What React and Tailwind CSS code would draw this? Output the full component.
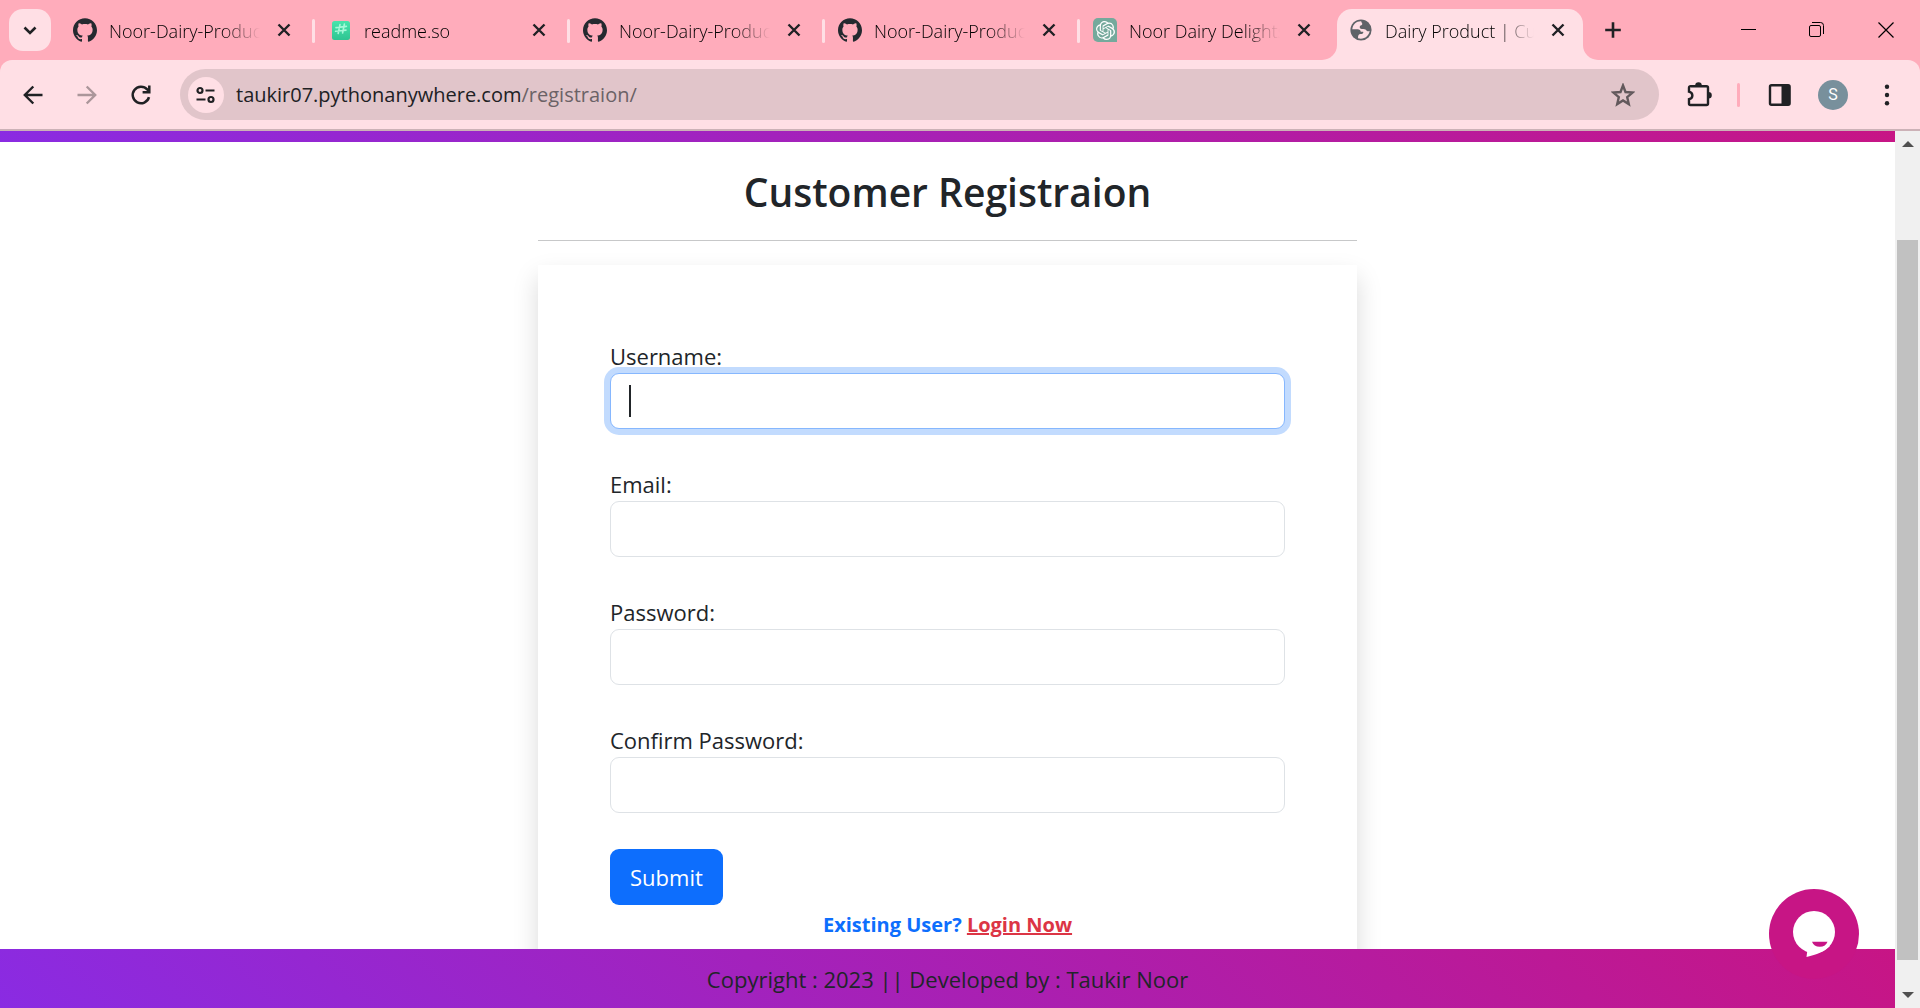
import React from "react";
import { SiGithub, SiOpenai } from "react-icons/si";

const ReadmeIcon = () => (
  <svg viewBox="0 0 24 24" className="h-6 w-6 shrink-0" aria-hidden="true">
    <defs>
      <linearGradient id="readme-tile" x1="0" y1="0" x2="0" y2="1">
        <stop offset="0" stopColor="#47e5ac" />
        <stop offset="1" stopColor="#2fc492" />
      </linearGradient>
    </defs>
    <rect x="4" y="3" width="18" height="19" rx="2.5" fill="url(#readme-tile)" />
    <g stroke="#a5f8d8" strokeWidth="1.6" strokeLinecap="round">
      <path d="M12 6.500 10.200 15.500M16.400 6 14.600 15M8 9.600 18.400 8.400M7.600 13.300 18 12.100" />
    </g>
  </svg>
);

const GlobeIcon = () => (
  <svg viewBox="0 0 24 24" className="h-6 w-6 shrink-0" aria-hidden="true">
    <circle cx="12" cy="12" r="10.6" fill="#5f6368" />
    <path
      d="M12.2 3.2C7.4 3 3.600 6.600 3.300 11.200H8.500C10.600 11.200 11.600 12.300 11.800 13.700H14.200C14.800 15.200 13.400 16 11.600 16 9.700 16 9 17.200 9 20.300 14.600 21.900 19.900 18.600 20.700 12.800 19.500 13.800 17.800 13.300 17.100 12.100 16.400 11 15 10.900 12.900 10.900 11 10.900 10.200 9.300 11 8 11.700 7 13.200 7.400 13.300 6 13.300 4.800 12.300 4.600 12.200 3.200Z"
      fill="#ffdfe5"
    />
  </svg>
);

const GithubTabIcon = () => <SiGithub className="h-6 w-6 shrink-0 text-[#24292f]" aria-hidden="true" />;

const OpenAiTabIcon = () => (
  <span className="flex h-6 w-6 shrink-0 items-center justify-center rounded-t-[5px] rounded-bl-[5px] bg-[#75a99c]">
    <SiOpenai className="h-[19px] w-[19px] text-white" aria-hidden="true" />
  </span>
);

const tabs = [
  { title: "Noor-Dairy-Products", Icon: GithubTabIcon },
  { title: "readme.so", Icon: ReadmeIcon },
  { title: "Noor-Dairy-Products", Icon: GithubTabIcon },
  { title: "Noor-Dairy-Products", Icon: GithubTabIcon },
  { title: "Noor Dairy Delights", Icon: OpenAiTabIcon },
];

const TabBody = ({ title, Icon }) => (
  <>
    <Icon />
    <button
      type="button"
      className="min-w-0 flex-1 overflow-hidden pt-0.5 text-left text-lg leading-6 font-light whitespace-nowrap text-black [mask-image:linear-gradient(to_right,#000_75%,transparent)]"
    >
      {title}
    </button>
    <button type="button" aria-label={"Close " + title} className="flex h-6 w-6 items-center justify-center">
      <svg viewBox="0 0 24 24" className="h-6 w-6">
        <path d="M6.500 6.500 17.500 17.500M17.500 6.500 6.500 17.500" stroke="currentColor" strokeWidth="2.4" />
      </svg>
    </button>
  </>
);

const TabStrip = () => (
  <div className="flex h-[60px] text-[#202124]">
    <div className="flex w-[61px] shrink-0 items-center pl-[9px]">
      <button
        type="button"
        aria-label="Search tabs"
        className="flex h-[42px] w-[42px] items-center justify-center rounded-[14px] bg-[#ffdfe5]"
      >
        <svg viewBox="0 0 24 24" className="h-6 w-6" fill="none">
          <path d="m6.500 9.500 5.500 5.500 5.500-5.500" stroke="currentColor" strokeWidth="2.600" />
        </svg>
      </button>
    </div>
    {tabs.map((tab, i) => (
      <div key={i} className="relative flex w-[255px] min-w-0 items-center gap-3 pr-5 pl-3">
        <TabBody {...tab} />
        {i < tabs.length - 1 && <span className="absolute top-[19px] right-px h-6 w-[3px] rounded-full bg-[#ffdfe5]" />}
      </div>
    ))}
    <div className="relative ml-px mt-[9px] flex w-[246px] min-w-0 items-center gap-3 rounded-t-[15px] bg-[#ffdfe5] pr-[13px] pb-[9px] pl-3">
      <span className="absolute bottom-0 -left-[15px] h-[15px] w-[15px] bg-[#ffdfe5]">
        <span className="block h-full w-full rounded-br-[15px] bg-[#ffacbb]" />
      </span>
      <span className="absolute -right-[15px] bottom-0 h-[15px] w-[15px] bg-[#ffdfe5]">
        <span className="block h-full w-full rounded-bl-[15px] bg-[#ffacbb]" />
      </span>
      <TabBody title="Dairy Product | Customer" Icon={GlobeIcon} />
    </div>
    <button type="button" aria-label="New tab" className="ml-[9px] flex w-[42px] items-center justify-center">
      <svg viewBox="0 0 24 24" className="h-6 w-6">
        <path d="M12 4.200V19.800M4.200 12H19.800" stroke="currentColor" strokeWidth="2.600" />
      </svg>
    </button>
    <div className="ml-auto flex text-black">
      <button type="button" aria-label="Minimize" className="flex w-[69px] items-center justify-center">
        <svg viewBox="0 0 16 16" className="h-4 w-4">
          <path d="M1 7.500H16" stroke="currentColor" />
        </svg>
      </button>
      <button type="button" aria-label="Restore" className="flex w-[69px] items-center justify-center">
        <svg viewBox="0 0 16 16" className="h-4 w-4" fill="none" stroke="currentColor">
          <rect x=".5" y="3.500" width="11" height="11" rx="1.500" />
          <path d="M3 .5h8.500a3 3 0 0 1 3 3V12" />
        </svg>
      </button>
      <button type="button" aria-label="Close" className="flex w-[69px] items-center justify-center">
        <svg viewBox="0 0 16 16" className="h-4 w-4">
          <path d="M.5.5 15.500 15.500M15.500.5.5 15.500" stroke="currentColor" strokeWidth="1.200" />
        </svg>
      </button>
    </div>
  </div>
);

const ToolButton = ({ label, className = "", children }) => (
  <button
    type="button"
    aria-label={label}
    className={"flex h-[42px] w-[42px] shrink-0 items-center justify-center " + className}
  >
    {children}
  </button>
);

const Toolbar = () => (
  <div className="flex h-[71px] items-center rounded-t-xl border-b-2 border-[#ccb2b7] bg-[#ffdfe5] px-3 text-[#202124]">
    <div className="flex gap-3">
      <ToolButton label="Back">
        <svg viewBox="0 0 24 24" className="h-6 w-6" fill="none" stroke="currentColor" strokeWidth="2.400">
          <path d="M21.500 12H4M12.300 3.500 3.800 12l8.500 8.500" />
        </svg>
      </ToolButton>
      <ToolButton label="Forward" className="text-[#ab969a]">
        <svg viewBox="0 0 24 24" className="h-6 w-6" fill="none" stroke="currentColor" strokeWidth="2.400">
          <path d="M2.500 12H20M11.700 3.500 20.200 12l-8.500 8.500" />
        </svg>
      </ToolButton>
      <ToolButton label="Reload">
        <svg viewBox="0 0 24 24" className="h-6 w-6" fill="none" stroke="currentColor" strokeWidth="2.500">
          <path d="M20 14.200A8.300 8.300 0 1 1 18.200 6.400L20 8.200" />
          <path d="M20.300 2.500V9.200H13.600" />
        </svg>
      </ToolButton>
    </div>
    <form className="ml-[18px] flex h-[51px] min-w-0 flex-1 items-center rounded-full bg-[#e1c5ca] pr-6 pl-2">
      <button
        type="button"
        aria-label="View site information"
        className="flex h-9 w-9 shrink-0 items-center justify-center rounded-full bg-[#ffdfe5]"
      >
        <svg viewBox="0 0 24 24" className="h-6 w-6" fill="none" stroke="currentColor" strokeWidth="2.200">
          <circle cx="6" cy="7.500" r="2.500" />
          <path d="M11.500 7.500h9M2.500 16.500h9" />
          <circle cx="17" cy="16.500" r="2.500" />
        </svg>
      </button>
      <div className="ml-3 min-w-0 flex-1 overflow-hidden text-xl leading-7 whitespace-nowrap text-[#202124]">
        taukir07.pythonanywhere.com<span className="text-[#6b6266]">/registraion/</span>
      </div>
      <button type="button" aria-label="Bookmark this tab" className="text-[#62595c]">
        <svg viewBox="0 0 24 24" className="h-6 w-6" fill="none" stroke="currentColor" strokeWidth="2.400">
          <path d="m12 2.500 2.500 6.500 7 .6-5.300 4.600 1.600 6.900-5.800-3.700-5.800 3.700 1.600-6.900L2.500 9.600l7-.6Z" />
        </svg>
      </button>
    </form>
    <ToolButton label="Extensions" className="ml-[18px]">
      <svg viewBox="0 0 28 28" className="h-7 w-7">
        <path
          d="M7 5.200H22.500a1.500 1.500 0 0 1 1.500 1.500V22.500a1.500 1.500 0 0 1-1.500 1.500H6.500a1.500 1.500 0 0 1-1.500-1.500V18.200C9.500 17.200 9.500 11.700 5 10.700V6.700A1.500 1.500 0 0 1 7 5.200Z"
          fill="none"
          stroke="currentColor"
          strokeWidth="2.400"
        />
        <path d="M11.200 4.500a3.300 3.300 0 0 1 6.600 0ZM24.500 11a3.300 3.300 0 0 1 0 6.600Z" fill="currentColor" />
      </svg>
    </ToolButton>
    <span className="ml-[18px] h-6 w-[3px] shrink-0 rounded-full bg-[#ffacbb]" />
    <ToolButton label="Side panel" className="ml-[18px]">
      <svg viewBox="0 0 24 24" className="h-6 w-6">
        <rect x="3" y="2.200" width="19.600" height="19.600" rx="1.500" fill="none" stroke="currentColor" strokeWidth="2.400" />
        <path d="M14.500 2H22.500v20H14.500Z" fill="currentColor" />
      </svg>
    </ToolButton>
    <ToolButton label="Profile" className="ml-3">
      <span className="flex h-[30px] w-[30px] items-center justify-center rounded-full bg-[#78909c] font-['Roboto',sans-serif] text-base text-white">
        S
      </span>
    </ToolButton>
    <ToolButton label="Menu" className="ml-3">
      <svg viewBox="0 0 24 24" className="h-6 w-6" fill="currentColor">
        <circle cx="12" cy="3.800" r="2.200" />
        <circle cx="12" cy="12" r="2.200" />
        <circle cx="12" cy="20.200" r="2.200" />
      </svg>
    </ToolButton>
  </div>
);

const fields = [
  { id: "username", label: "Username:", type: "text", focused: true },
  { id: "email", label: "Email:", type: "email" },
  { id: "password", label: "Password:", type: "password" },
  { id: "confirm", label: "Confirm Password:", type: "password" },
];

const Field = ({ id, label, type, focused }) => (
  <div className="mb-9">
    <label htmlFor={id} className="block pt-0.5 leading-[34px]">
      {label}
    </label>
    <div className="relative">
      <input
        id={id}
        type={type}
        className={
          "block h-14 w-full rounded-[9px] border bg-white px-[18px] outline-none " +
          (focused ? "border-[#86b7fe] ring-6 ring-[#c2dbfe]" : "border-[#dee2e6]")
        }
      />
      {focused && <span className="absolute top-3 left-[19px] h-8 w-0.5 bg-[#212529]" />}
    </div>
  </div>
);

const Scrollbar = () => (
  <div className="flex w-[25px] shrink-0 flex-col items-center bg-[#f0f0f0] py-2.5" aria-hidden="true">
    <svg viewBox="0 0 12 6" className="h-1.5 w-3" fill="#505050">
      <path d="M6 0l6 6H0Z" />
    </svg>
    <div className="flex w-full flex-1 flex-col px-0.5 pt-[93px] pb-8">
      <div className="flex-1 bg-[#c1c1c1]" />
    </div>
    <svg viewBox="0 0 12 6" className="h-1.5 w-3" fill="#505050">
      <path d="M6 6l6-6H0Z" />
    </svg>
  </div>
);

export default function App() {
  return (
    <div className="flex h-screen flex-col overflow-hidden bg-[#ffacbb] font-['Open_Sans',sans-serif]">
      <header className="relative shrink-0">
        <TabStrip />
        <Toolbar />
      </header>
      <div className="flex min-h-0 flex-1 bg-white">
        <div className="relative flex min-w-0 flex-1 flex-col text-[22px] text-[#212529]">
          <nav className="h-[11px] shrink-0 bg-[linear-gradient(45deg,#8a2be2,#c71585)]" />
          <main className="min-h-0 flex-1 overflow-hidden pt-[26px]">
            <div className="mx-auto w-full max-w-[819px]">
              <h1 className="text-center text-[39px] leading-12 font-semibold">Customer Registraion</h1>
              <hr className="my-6 border-[#c7c8c9]" />
              <form className="bg-white p-[72px] shadow-[0_12px_24px_rgba(0,0,0,0.15)]">
                {fields.map((f) => (
                  <Field key={f.id} {...f} />
                ))}
                <button type="submit" className="block h-14 rounded-[9px] bg-[#0d6efd] px-5 text-white">
                  Submit
                </button>
                <p className="mt-1 text-center text-xl leading-8 font-bold text-[#0d6efd]">
                  Existing User?{" "}
                  <a href="#login" className="text-[#dc3545] underline">
                    Login Now
                  </a>
                </p>
              </form>
            </div>
          </main>
          <footer className="shrink-0 bg-[linear-gradient(45deg,#8a2be2,#c71585)] pt-3 pb-[11px] text-center leading-9">
            Copyright : 2023 || Developed by : Taukir Noor
          </footer>
          <button
            type="button"
            aria-label="Open chat"
            className="absolute right-9 bottom-[29px] flex h-[90px] w-[90px] items-center justify-center rounded-full bg-[#c71585]"
          >
            <svg viewBox="0 0 48 48" className="h-12 w-12">
              <circle cx="24" cy="22" r="21" fill="#fff" />
              <path d="M17.500 39 16.500 47C27 44.500 34 42 40 36L30 30Z" fill="#fff" />
              <path d="M22 31.700H37.500c-1 3-3.800 5-7.700 5S23 34.700 22 31.700Z" fill="#c71585" />
            </svg>
          </button>
        </div>
        <Scrollbar />
      </div>
    </div>
  );
}
